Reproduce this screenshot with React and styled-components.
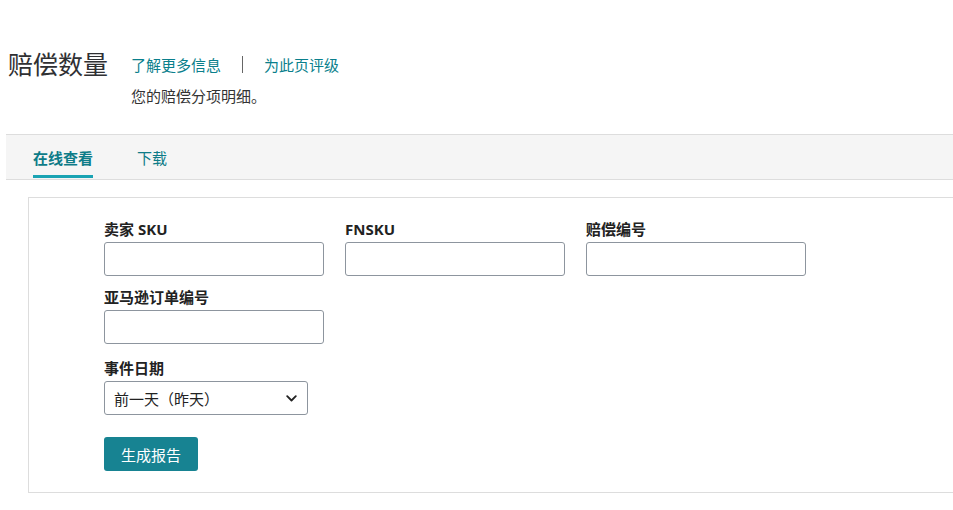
import React, { useState } from 'react'
import styled, { createGlobalStyle } from 'styled-components'

const GlobalStyle = createGlobalStyle`
    body {
        margin: 0;
        background: #fff;
        font-family: "Noto Sans", "Noto Sans CJK SC", sans-serif;
        color: #333;
        overflow-x: hidden;
    }
`

const Page = styled.div`
    padding-top: 48px;
`

const Header = styled.header`
    display: flex;
    align-items: flex-start;
    gap: 23px;
    padding-left: 8px;
`

const Title = styled.h1`
    margin: 0;
    font-size: 25px;
    font-weight: 400;
    line-height: 32px;
    color: #2f3033;
`

const HeaderInfo = styled.div`
    display: flex;
    flex-direction: column;
`

const Links = styled.div`
    display: flex;
    align-items: center;
    height: 32px;
    font-size: 15px;
`

const Link = styled.a`
    color: #0a7f8c;
    text-decoration: none;
    cursor: pointer;
`

const Divider = styled.span`
    width: 1px;
    height: 17px;
    margin: 0 21px 0 21px;
    background: #666;
`

const Subtitle = styled.p`
    margin: 6px 0 0;
    font-size: 15px;
    line-height: 20px;
    color: #333;
`

const TabBar = styled.nav`
    display: flex;
    gap: 44px;
    margin: 28px 0 0 6px;
    padding: 0 27px;
    height: 44px;
    background: #f5f5f5;
    border-top: 1px solid #ddd;
    border-bottom: 1px solid #ddd;
`

const Tab = styled.div`
    position: relative;
    display: flex;
    align-items: center;
    font-size: 15px;
    font-weight: ${p => (p.$active ? 700 : 400)};
    color: #0e7c88;
    cursor: pointer;

    &::after {
        content: '';
        display: ${p => (p.$active ? 'block' : 'none')};
        position: absolute;
        left: 0;
        right: 0;
        bottom: 1px;
        height: 3px;
        background: #1aa3b3;
    }
`

const Panel = styled.section`
    margin: 17px 0 0 28px;
    padding: 21px 0 21px 75px;
    border: 1px solid #ddd;
    border-right: none;
`

const Fields = styled.div`
    display: grid;
    grid-template-columns: repeat(3, 220px);
    column-gap: 21px;
    row-gap: 11px;
`

const Field = styled.label`
    display: flex;
    flex-direction: column;
    gap: 3px;
    grid-column: ${p => p.$span || 'auto'};
    margin-top: ${p => p.$shift || 0}px;
`

const Label = styled.span`
    font-size: 15px;
    line-height: 20px;
    font-weight: 700;
    color: #222;
`

const Input = styled.input`
    box-sizing: border-box;
    width: 220px;
    height: 34px;
    border: 1px solid #8d959e;
    border-radius: 3px;
    padding: 0 8px;
    font: inherit;
    outline: none;
`

const SelectBox = styled.div`
    box-sizing: border-box;
    display: flex;
    align-items: center;
    justify-content: space-between;
    width: 204px;
    height: 34px;
    padding: 0 10px 0 9px;
    border: 1px solid #8d959e;
    border-radius: 3px;
    font-size: 15px;
    color: #222;
    cursor: pointer;
`

const Button = styled.button`
    margin-top: 22px;
    width: 94px;
    height: 34px;
    border: none;
    border-radius: 3px;
    background: #178392;
    color: #fff;
    font: inherit;
    font-size: 15px;
    cursor: pointer;
`

function Chevron() {
    return (
        <svg width="11" height="7" viewBox="0 0 11 7" fill="none">
            <path d="M1.2 1.2 L5.5 5.5 L9.8 1.2" stroke="#222" strokeWidth="1.8" strokeLinecap="round" strokeLinejoin="round" />
        </svg>
    )
}

export default function App() {
    const [tab, setTab] = useState('online')

    return (
        <Page>
            <GlobalStyle />
            <Header>
                <Title>赔偿数量</Title>
                <HeaderInfo>
                    <Links>
                        <Link>了解更多信息</Link>
                        <Divider />
                        <Link>为此页评级</Link>
                    </Links>
                    <Subtitle>您的赔偿分项明细。</Subtitle>
                </HeaderInfo>
            </Header>

            <TabBar>
                <Tab $active={tab === 'online'} onClick={() => setTab('online')}>在线查看</Tab>
                <Tab $active={tab === 'download'} onClick={() => setTab('download')}>下载</Tab>
            </TabBar>

            <Panel>
                <Fields>
                    <Field>
                        <Label>卖家 SKU</Label>
                        <Input />
                    </Field>
                    <Field>
                        <Label>FNSKU</Label>
                        <Input />
                    </Field>
                    <Field>
                        <Label>赔偿编号</Label>
                        <Input />
                    </Field>
                    <Field $span="1 / 2">
                        <Label>亚马逊订单编号</Label>
                        <Input />
                    </Field>
                    <Field $span="1 / 3" $shift={3}>
                        <Label>事件日期</Label>
                        <SelectBox>
                            <span>前一天（昨天）</span>
                            <Chevron />
                        </SelectBox>
                    </Field>
                </Fields>
                <Button>生成报告</Button>
            </Panel>
        </Page>
    )
}
